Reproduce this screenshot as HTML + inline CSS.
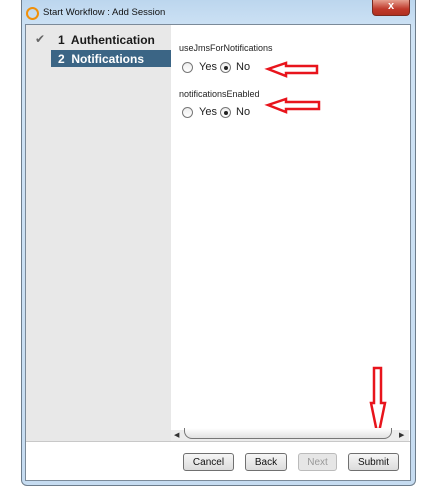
<!DOCTYPE html>
<html><head><style>
body{margin:0;width:433px;height:500px;background:#fff;position:relative;overflow:hidden;font-family:"Liberation Sans",sans-serif;}
.a{position:absolute}
.frame{left:21px;top:0;width:395px;height:486px;background:linear-gradient(#bcd6ee,#cfe3f5 30px,#c6dcf1);border:1px solid #6d7d8c;border-top:none;border-radius:0 0 6px 6px;box-sizing:border-box}
.content{left:25px;top:24px;width:386px;height:457px;background:#fff;border:1px solid #7b8a99;box-sizing:border-box}
.left{left:26px;top:25px;width:145px;height:416px;background:#e8e8e8}
.sel{left:51px;top:50px;width:120px;height:17px;background:#3b6585}
.t{font-size:12px;font-weight:bold;color:#1a1a1a}
.lbl{font-size:9px;color:#222}
.rad{width:9px;height:9px;border:1px solid #777;border-radius:50%;background:linear-gradient(#eee,#fff)}
.dot::after{content:"";position:absolute;left:2.5px;top:2.5px;width:4px;height:4px;border-radius:50%;background:#222}
.opt{font-size:11px;color:#222}
.btn{top:453px;height:18px;border:1px solid #707070;border-radius:3px;background:linear-gradient(#f6f6f6,#dcdcdc);font-size:10px;text-align:center;line-height:18px;color:#111;box-sizing:border-box}
</style></head><body>
<div class="a frame"></div>
<div class="a" style="left:26px;top:7px;width:9px;height:9px;border:2px solid #f0900a;border-radius:50%"></div>
<div class="a" style="left:43px;top:7px;font-size:9.5px;color:#111">Start Workflow : Add Session</div>
<div class="a" style="left:372px;top:0;width:38px;height:16px;background:linear-gradient(#e6a090,#c0392b 60%,#b03020);border:1px solid #7a2a20;border-top:none;border-radius:0 0 4px 4px;box-sizing:border-box;color:#fff;font-weight:bold;font-size:11px;text-align:center;line-height:13px">x</div>
<div class="a content"></div>
<div class="a left"></div>
<div class="a" style="left:26px;top:441px;width:384px;height:1px;background:#c8c8c8"></div>
<div class="a sel"></div>
<div class="a" style="left:35px;top:32px;font-size:12px;color:#666">✔</div>
<div class="a t" style="left:58px;top:33px">1&nbsp; Authentication</div>
<div class="a t" style="left:58px;top:52px;color:#fff">2&nbsp; Notifications</div>
<div class="a lbl" style="left:179px;top:43px">useJmsForNotifications</div>
<div class="a rad" style="left:182px;top:62px"></div>
<div class="a opt" style="left:199px;top:61px">Yes</div>
<div class="a rad dot" style="left:220px;top:62px"></div>
<div class="a opt" style="left:236px;top:61px">No</div>
<div class="a lbl" style="left:179px;top:89px">notificationsEnabled</div>
<div class="a rad" style="left:182px;top:107px"></div>
<div class="a opt" style="left:199px;top:106px">Yes</div>
<div class="a rad dot" style="left:220px;top:107px"></div>
<div class="a opt" style="left:236px;top:106px">No</div>
<svg class="a" style="left:0;top:0" width="433" height="500">
<g fill="none" stroke="#e8141c" stroke-width="2.5">
<path d="M268 69 L286 63 L286 66 L317 66 L317 73 L286 73 L286 76 Z"/>
<path d="M268 105 L286 99 L286 102 L319 102 L319 109 L286 109 L286 112 Z"/>
<path d="M374 368 L381 368 L381 403 L385 403 L378 437 L371 403 L374 403 Z"/>
</g></svg>
<div class="a" style="left:171px;top:430px;width:238px;height:11px;background:#ececec"></div>
<div class="a" style="left:174px;top:431px;font-size:7px;color:#333">◀</div>
<div class="a" style="left:399px;top:431px;font-size:7px;color:#333">▶</div>
<div class="a" style="left:184px;top:428px;width:206px;height:10px;border:1px solid #777;border-top:none;border-radius:0 0 8px 8px;background:linear-gradient(#fff,#e2e2e2)"></div>
<div class="a btn" style="left:183px;width:51px">Cancel</div>
<div class="a btn" style="left:245px;width:42px">Back</div>
<div class="a btn" style="left:298px;width:39px;color:#999;border-color:#bbb;background:#e6e6e6">Next</div>
<div class="a btn" style="left:348px;width:51px">Submit</div>
</body></html>
